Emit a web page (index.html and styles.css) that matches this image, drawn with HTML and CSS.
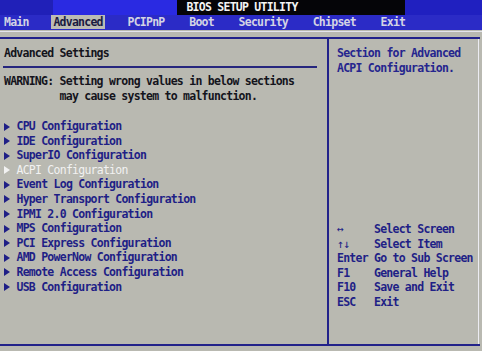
FILE: index.html
```html
<!DOCTYPE html>
<html>
<head>
<meta charset="utf-8">
<link rel="stylesheet" href="styles.css">
</head>
<body>
<div class="title">BIOS SETUP UTILITY</div>
<div class="menu">Main    <span class="sel">Advanced</span>    PCIPnP    Boot    Security    Chipset    Exit</div>
<div class="gap"></div>
<div class="box">
  <div class="left">
    <div class="heading">Advanced Settings</div>
    <div class="rule"></div>
    <div class="warn">WARNING: Setting wrong values in below sections
         may cause system to malfunction.</div>
    <ul class="list">
      <li><i class="tri"></i>CPU Configuration</li>
      <li><i class="tri"></i>IDE Configuration</li>
      <li><i class="tri"></i>SuperIO Configuration</li>
      <li class="active"><i class="tri"></i>ACPI Configuration</li>
      <li><i class="tri"></i>Event Log Configuration</li>
      <li><i class="tri"></i>Hyper Transport Configuration</li>
      <li><i class="tri"></i>IPMI 2.0 Configuration</li>
      <li><i class="tri"></i>MPS Configuration</li>
      <li><i class="tri"></i>PCI Express Configuration</li>
      <li><i class="tri"></i>AMD PowerNow Configuration</li>
      <li><i class="tri"></i>Remote Access Configuration</li>
      <li><i class="tri"></i>USB Configuration</li>
    </ul>
  </div>
  <div class="right">
    <div class="help">Section for Advanced
ACPI Configuration.</div>
    <div class="keys">
      <span class="k arr">↔</span><span class="d">Select Screen</span>
      <span class="k arr">↑↓</span><span class="d">Select Item</span>
      <span class="k">Enter</span><span class="d">Go to Sub Screen</span>
      <span class="k">F1</span><span class="d">General Help</span>
      <span class="k">F10</span><span class="d">Save and Exit</span>
      <span class="k">ESC</span><span class="d">Exit</span>
    </div>
  </div>
</div>
</body>
</html>
```
FILE: styles.css
```css
html, body {
  margin: 0;
  padding: 0;
  background: #b9b9b1;
  width: 482px;
  height: 351px;
  overflow: hidden;
}
body {
  font-family: "DejaVu Sans Mono", "Liberation Mono", monospace;
  font-weight: bold;
  font-size: 11.5px;
  letter-spacing: -0.75px;
  color: #1f1f86;
}
.title {
  height: 15px;
  line-height: 15px;
  text-align: center;
  color: #f4f4f4;
  background: linear-gradient(to right, #2020b8 0 53px, #2a2ae2 53px 177px, #050508 177px 405px, #2020c0 405px);
  padding-left: 2px;
}
.menu {
  height: 15px;
  line-height: 15px;
  background: #2b2bc6;
  color: #d4d4e4;
  white-space: pre;
  padding-left: 4px;
}
.sel {
  background: #bcbcb4;
  color: #1a1a40;
  padding: 0 2px;
  margin: 0 -2px;
}
.gap {
  height: 6px;
  border-top: 1px solid #e4e4ec;
  box-sizing: border-box;
  margin-top: 1px;
}
.box {
  display: grid;
  grid-template-columns: 329px 150px;
  width: 480px;
  height: 309px;
  border-top: 2px solid #22228a;
  border-bottom: 2px solid #22228a;
  box-sizing: border-box;
}
.left {
  border-right: 2px solid #22228a;
  padding: 7px 0 0 4px;
}
.heading {
  color: #14141c;
  line-height: 15px;
}
.rule {
  height: 0;
  border-top: 2px solid #26267e;
  margin: 5px 10px 6px -1px;
}
.warn {
  color: #14141c;
  white-space: pre;
  line-height: 15px;
}
.list {
  list-style: none;
  margin: 15px 0 0;
  padding: 0;
}
.list li {
  line-height: 14.6px;
  height: 14.6px;
  white-space: pre;
}
.list li.active {
  color: #f2f2f2;
  font-weight: normal;
}
.tri {
  display: inline-block;
  width: 0;
  height: 0;
  border-left: 6px solid currentColor;
  border-top: 4px solid transparent;
  border-bottom: 4px solid transparent;
  margin-right: 6.5px;
  vertical-align: -0.5px;
}
.right {
  border-right: 1px solid #ececf2;
  padding: 7px 0 0 8px;
  display: flex;
  flex-direction: column;
}
.help {
  white-space: pre;
  line-height: 15px;
  color: #25258e;
}
.keys {
  display: grid;
  grid-template-columns: 37px auto;
  grid-auto-rows: 14.6px;
  line-height: 14.6px;
  margin-top: 146px;
  color: #1f1f86;
  white-space: nowrap;
}
.arr {
  font-weight: normal;
}
```
